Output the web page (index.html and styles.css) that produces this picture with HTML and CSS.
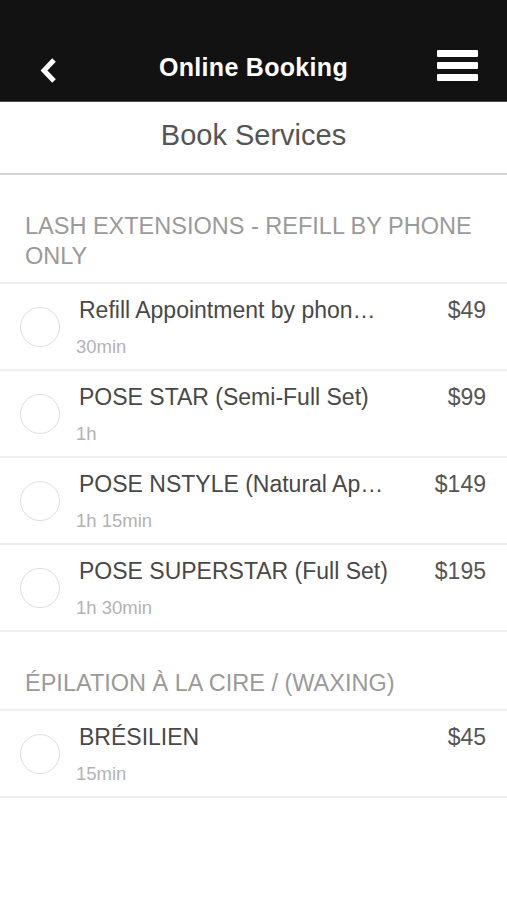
FILE: index.html
```html
<!DOCTYPE html>
<html lang="en">
<head>
  <meta charset="UTF-8">
  <title>Online Booking</title>
  <link rel="stylesheet" href="styles.css">
</head>
<body>
  <header class="topbar">
    <a class="back-btn" href="#">
      <svg width="16" height="25" viewBox="0 0 16 25"><polyline points="14,2 4,12.5 14,23" fill="none" stroke="#fff" stroke-width="5"/></svg>
    </a>
    <h1>Online Booking</h1>
    <a class="menu-btn" href="#">
      <span></span><span></span><span></span>
    </a>
  </header>

  <div class="subbar">Book Services</div>

  <!-- Lash extensions -->
  <section class="category">
    <h2>LASH EXTENSIONS - REFILL BY PHONE ONLY</h2>
    <div class="service">
      <span class="radio"></span>
      <div class="info">
        <div class="line">
          <span class="name">Refill Appointment by phon…</span>
          <span class="price">$49</span>
        </div>
        <div class="duration">30min</div>
      </div>
    </div>
    <div class="service">
      <span class="radio"></span>
      <div class="info">
        <div class="line">
          <span class="name">POSE STAR (Semi-Full Set)</span>
          <span class="price">$99</span>
        </div>
        <div class="duration">1h</div>
      </div>
    </div>
    <div class="service">
      <span class="radio"></span>
      <div class="info">
        <div class="line">
          <span class="name">POSE NSTYLE (Natural Ap…</span>
          <span class="price">$149</span>
        </div>
        <div class="duration">1h 15min</div>
      </div>
    </div>
    <div class="service">
      <span class="radio"></span>
      <div class="info">
        <div class="line">
          <span class="name">POSE SUPERSTAR (Full Set)</span>
          <span class="price">$195</span>
        </div>
        <div class="duration">1h 30min</div>
      </div>
    </div>
  </section>

  <!-- Waxing -->
  <section class="category">
    <h2>ÉPILATION À LA CIRE / (WAXING)</h2>
    <div class="service">
      <span class="radio"></span>
      <div class="info">
        <div class="line">
          <span class="name">BRÉSILIEN</span>
          <span class="price">$45</span>
        </div>
        <div class="duration">15min</div>
      </div>
    </div>
  </section>
</body>
</html>
```

FILE: styles.css
```css
body {
  margin: 0;
  font-family: "Liberation Sans", Arial, sans-serif;
  background: #fff;
}
.topbar {
  background: #121212;
  height: 67px;
  padding-top: 34px;
  border-bottom: 1px solid #4a4a4a;
  display: grid;
  grid-template-columns: 1fr auto 1fr;
  align-items: center;
}
.topbar h1 {
  margin: 0;
  color: #fff;
  font-size: 25px;
  letter-spacing: 0.3px;
  font-weight: bold;
}
.back-btn {
  padding-left: 40px;
  margin-top: 6px;
  display: flex;
}
.menu-btn {
  justify-self: end;
  margin-right: 29px;
  margin-bottom: 4px;
  display: flex;
  flex-direction: column;
  gap: 5px;
}
.menu-btn span {
  width: 41px;
  height: 7px;
  background: #fff;
  border-radius: 1px;
}
.subbar {
  height: 66px;
  padding-bottom: 5px;
  display: flex;
  align-items: center;
  justify-content: center;
  font-size: 29px;
  color: #555;
  border-bottom: 2px solid #d2d2d2;
}
.category h2 {
  margin: 0;
  padding: 36px 25px 11px;
  font-size: 23.5px;
  line-height: 30px;
  font-weight: normal;
  color: #9a9a9a;
  border-bottom: 2px solid #efefef;
}
.service {
  height: 85px;
  display: flex;
  align-items: center;
  padding-left: 20px;
  border-bottom: 2px solid #efefef;
}
.radio {
  width: 38px;
  height: 38px;
  border: 1.5px solid #dedede;
  border-radius: 50%;
  flex-shrink: 0;
}
.info {
  flex: 1;
  min-width: 0;
  align-self: flex-start;
  padding-top: 13px;
  margin-left: 19px;
}
.line {
  display: flex;
  line-height: 27px;
  font-size: 23px;
}
.name {
  flex: 1;
  min-width: 0;
  color: #484848;
  white-space: nowrap;
  overflow: hidden;
  text-overflow: ellipsis;
}
.price {
  color: #555;
  padding: 0 21px 0 16px;
}
.duration {
  margin-top: 12px;
  margin-left: -3px;
  font-size: 18.5px;
  line-height: 22px;
  color: #b3b3b3;
}
```
